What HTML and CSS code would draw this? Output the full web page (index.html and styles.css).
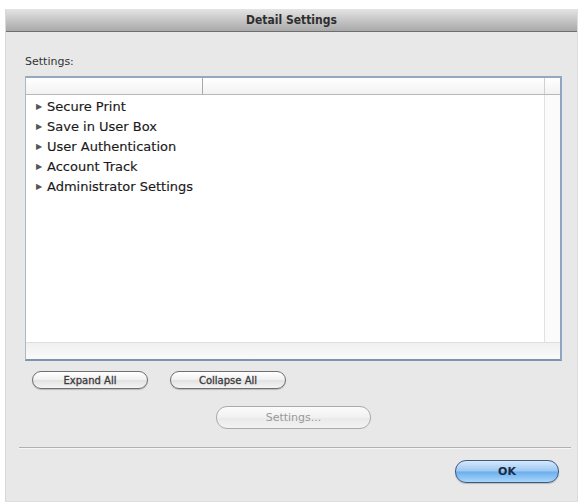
FILE: index.html
```html
<!DOCTYPE html>
<html>
<head>
<meta charset="utf-8">
<link rel="stylesheet" href="styles.css">
</head>
<body>
<div class="dialog">
  <div class="titlebar">Detail Settings</div>
  <div class="content">
    <div class="label">Settings:</div>
    <div class="table">
      <div class="thead">
        <div class="th th1"></div>
        <div class="th th2"></div>
        <div class="th th3"></div>
      </div>
      <div class="tbody">
        <div class="rows">
          <div class="row"><span class="tri">&#9654;</span>Secure Print</div>
          <div class="row"><span class="tri">&#9654;</span>Save in User Box</div>
          <div class="row"><span class="tri">&#9654;</span>User Authentication</div>
          <div class="row"><span class="tri">&#9654;</span>Account Track</div>
          <div class="row"><span class="tri">&#9654;</span>Administrator Settings</div>
        </div>
        <div class="gutter"></div>
      </div>
      <div class="tfoot"></div>
    </div>
    <div class="btnrow">
      <button class="btn btn-expand">Expand All</button>
      <button class="btn btn-collapse">Collapse All</button>
    </div>
    <div class="btnrow2">
      <button class="btn btn-settings" disabled>Settings...</button>
    </div>
    <div class="sep"></div>
    <div class="okrow">
      <button class="btn btn-ok">OK</button>
    </div>
  </div>
</div>
</body>
</html>
```
FILE: styles.css
```css
html, body {
  margin: 0;
  padding: 0;
  background: #ffffff;
}
body {
  width: 582px;
  height: 504px;
  font-family: "DejaVu Sans", "Liberation Sans", sans-serif;
  padding: 9px 4px 3px 5px;
  box-sizing: border-box;
}
.dialog {
  height: 492px;
  background: #e8e8e8;
  display: flex;
  flex-direction: column;
  border-right: 1px solid #dcdcdc;
  border-left: 1px solid #d8d8d8;
  border-bottom: 1px solid #dedede;
}
.titlebar {
  height: 22px;
  background: linear-gradient(#e4e4e4, #c6c6c6 50%, #a9a9a9);
  border-bottom: 1px solid #6e6e6e;
  text-align: center;
  font-family: "DejaVu Sans Condensed", "DejaVu Sans", sans-serif;
  font-size: 12px;
  line-height: 23px;
  color: #2e2e2e;
  font-weight: bold;
}
.content {
  flex: 1;
  display: flex;
  flex-direction: column;
  padding: 0 0 0 19px;
}
.label {
  margin-top: 23px;
  font-size: 11px;
  color: #333;
  height: 14px;
  line-height: 14px;
}
.table {
  margin-top: 7px;
  width: 537px;
  height: 285px;
  border-style: solid;
  border-width: 2px 2px 2px 1px;
  border-color: #94a8c0 #8fa6c2 #7f95ae #a8b8cc;
  background: #fff;
  display: flex;
  flex-direction: column;
  box-sizing: border-box;
}
.thead {
  height: 16px;
  display: flex;
  background: linear-gradient(#ffffff, #f2f2f2);
  border-bottom: 1px solid #b8b8b8;
}
.th1 {
  width: 176px;
  border-right: 1px solid #a8a8a8;
}
.th2 {
  flex: 1;
  border-right: 1px solid #d0d0d0;
}
.th3 {
  width: 15px;
}
.tbody {
  flex: 1;
  display: flex;
}
.rows {
  flex: 1;
  padding-top: 2px;
}
.gutter {
  width: 15px;
  border-left: 1px solid #e2e2e2;
  background: #fbfbfb;
}
.tfoot {
  height: 16px;
  background: linear-gradient(#f0f0f0, #fafafa);
  border-top: 1px solid #dedede;
}
.row {
  height: 20px;
  line-height: 20px;
  font-size: 13px;
  color: #1a1a1a;
  -webkit-text-stroke: 0.15px #1a1a1a;
  padding-left: 10px;
  display: flex;
  align-items: center;
}
.tri {
  font-size: 8px;
  color: #555;
  -webkit-text-stroke: 0;
  width: 11px;
  display: inline-block;
}
.btn {
  font-family: "DejaVu Sans", "Liberation Sans", sans-serif;
  font-size: 10px;
  color: #3a3a3a;
  -webkit-text-stroke: 0.3px #3a3a3a;
  height: 18px;
  border: 1px solid #6f6f6f;
  border-radius: 9px;
  background: linear-gradient(#ffffff, #f0f0f0 50%, #e2e2e2 51%, #f4f4f4);
  padding: 0;
  box-shadow: 0 1px 1px rgba(0,0,0,0.2);
}
.btnrow {
  margin-top: 10px;
  display: flex;
  gap: 22px;
  padding-left: 7px;
}
.btn-expand {
  width: 116px;
}
.btn-collapse {
  width: 116px;
}
.btnrow2 {
  margin-top: 17px;
  padding-left: 191px;
}
.btn-settings {
  width: 155px;
  height: 23px;
  border-radius: 11px;
  border-color: #aaa;
  color: #999;
  -webkit-text-stroke: 0;
  font-size: 11px;
  background: linear-gradient(#fbfbfb, #f1f1f1 50%, #e9e9e9 51%, #f3f3f3);
  box-shadow: none;
}
.sep {
  margin-top: 18px;
  margin-left: -6px;
  width: 552px;
  height: 1px;
  background: #b0b0b0;
  border-bottom: 1px solid #f6f6f6;
}
.okrow {
  margin-top: 11px;
  display: flex;
  justify-content: flex-end;
  padding-right: 18px;
}
.btn-ok {
  width: 104px;
  height: 23px;
  border-radius: 11px;
  border: 1px solid #3d5a80;
  color: #1a2a44;
  -webkit-text-stroke: 0;
  font-weight: bold;
  font-size: 11px;
  background: linear-gradient(#d6e8fb, #9cc8f2 48%, #6aaeed 52%, #a9d6fb);
}
```
